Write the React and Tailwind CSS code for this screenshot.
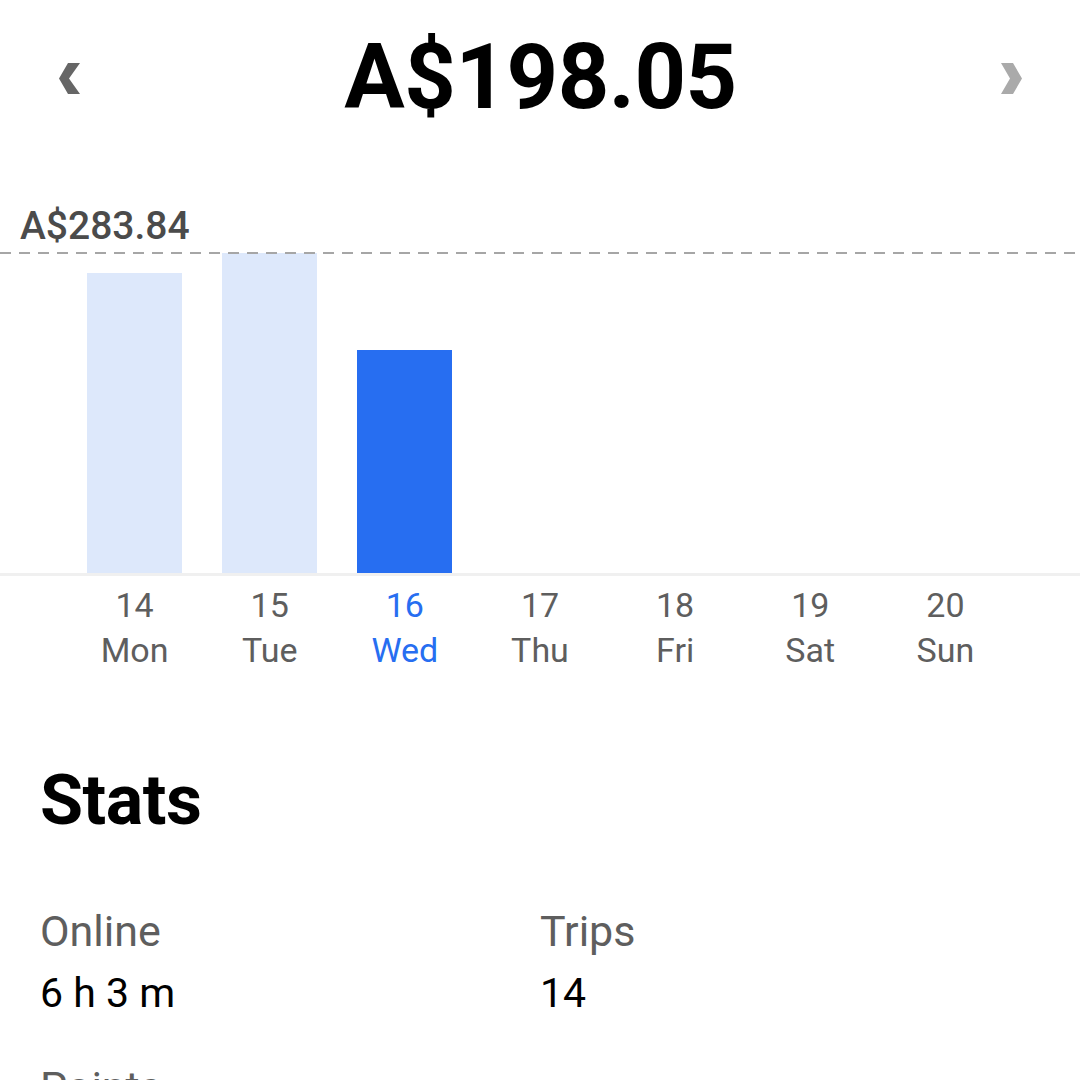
import React from 'react';

const days = [
  { num: '14', name: 'Mon', h: 300 },
  { num: '15', name: 'Tue', h: 320 },
  { num: '16', name: 'Wed', h: 223, active: true },
  { num: '17', name: 'Thu', h: 0 },
  { num: '18', name: 'Fri', h: 0 },
  { num: '19', name: 'Sat', h: 0 },
  { num: '20', name: 'Sun', h: 0 },
];

const stats = [
  { label: 'Online', value: '6 h 3 m' },
  { label: 'Trips', value: '14' },
  { label: 'Points', value: '0' },
];

const App = () => {
  return (
    <div className="w-[1080px] bg-white font-['Roboto',sans-serif] text-black overflow-hidden">
      {/* Header with week total */}
      <div className="h-[155px] flex items-center justify-between pl-[59px] pr-[58px]">
        <svg width="21" height="31" viewBox="0 0 21 31" className="mt-[2px]">
          <polygon points="9,0 21,0 10,15.5 21,31 9,31 0,15.5" fill="#666666" />
        </svg>
        <h1 className="text-[90px] leading-none font-bold tracking-[-0.5px]">A$198.05</h1>
        <svg width="21" height="31" viewBox="0 0 21 31" className="mt-[2px]">
          <polygon points="0,0 12,0 21,15.5 12,31 0,31 9,15.5" fill="#aaaaaa" />
        </svg>
      </div>

      {/* Chart */}
      <div className="mt-[52px] pl-[20px] text-[39px] leading-none font-medium text-[#4b4b4b]">A$283.84</div>
      <div className="mt-[6px] relative h-[321px] flex items-end px-[67px]">
        <div className="absolute top-0 left-0 right-0 h-[2px] z-10 bg-[repeating-linear-gradient(90deg,#a6a6a6_0_11px,transparent_11px_19px)]" />
        {days.map((d) => (
          <div key={d.num} className="flex-1 flex justify-center">
            {d.h > 0 && (
              <div
                className={`w-[95px] ${d.active ? 'bg-[#276ef1]' : 'bg-[#dde8fb]'}`}
                style={{ height: d.h }}
              />
            )}
          </div>
        ))}
      </div>
      <div className="h-[3px] bg-[#f0f0f0]" />
      <div className="mt-[7px] flex px-[67px]">
        {days.map((d) => (
          <div
            key={d.num}
            className={`flex-1 flex flex-col items-center text-[34px] leading-[45px] ${
              d.active ? 'text-[#276ef1]' : 'text-[#5e5e5e]'
            }`}
          >
            <span>{d.num}</span>
            <span>{d.name}</span>
          </div>
        ))}
      </div>

      {/* Stats */}
      <div className="px-[40px]">
        <h2 className="mt-[92px] text-[70px] leading-none font-bold tracking-[-0.5px]">Stats</h2>
        <div className="mt-[75px] grid grid-cols-2 gap-y-[52px]">
          {stats.map((s) => (
            <div key={s.label}>
              <div className="text-[43px] leading-none text-[#5e5e5e]">{s.label}</div>
              <div className="mt-[20px] text-[41px] leading-none">{s.value}</div>
            </div>
          ))}
        </div>
      </div>
    </div>
  );
};

export default App;
